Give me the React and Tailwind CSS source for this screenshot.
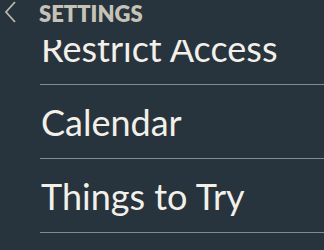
import React from "react";

const items = ["Restrict Access", "Calendar", "Things to Try"];

const App = () => {
  return (
    <div
      className="w-[324px] h-[250px] overflow-hidden bg-[#27333d] flex flex-col"
      style={{ fontFamily: "Lato, 'Open Sans', sans-serif" }}
    >
      {/* header */}
      <div className="h-[40px] flex items-start shrink-0">
        <svg
          width="14"
          height="22"
          viewBox="0 0 14 22"
          className="ml-[4px] mt-[1px]"
          fill="none"
          stroke="#b9b8b0"
          strokeWidth="1.8"
        >
          <path d="M11 1 L2 11 L11 21" />
        </svg>
        <span className="ml-[21px] pt-[3px] text-[22px] font-extrabold text-[#c6c3b6] leading-none">
          SETTINGS
        </span>
      </div>

      {/* list, scrolled */}
      <div className="flex-1 overflow-hidden">
        <div className="-mt-[29px]">
          {items.map((item) => (
            <div
              key={item}
              className="ml-[40px] h-[74px] flex items-center border-b-[1.5px] border-[#7f8c96]"
            >
              <span className="text-[36px] text-[#f2f0e8] leading-none pl-[1px]">
                {item}
              </span>
            </div>
          ))}
        </div>
      </div>
    </div>
  );
};

export default App;
